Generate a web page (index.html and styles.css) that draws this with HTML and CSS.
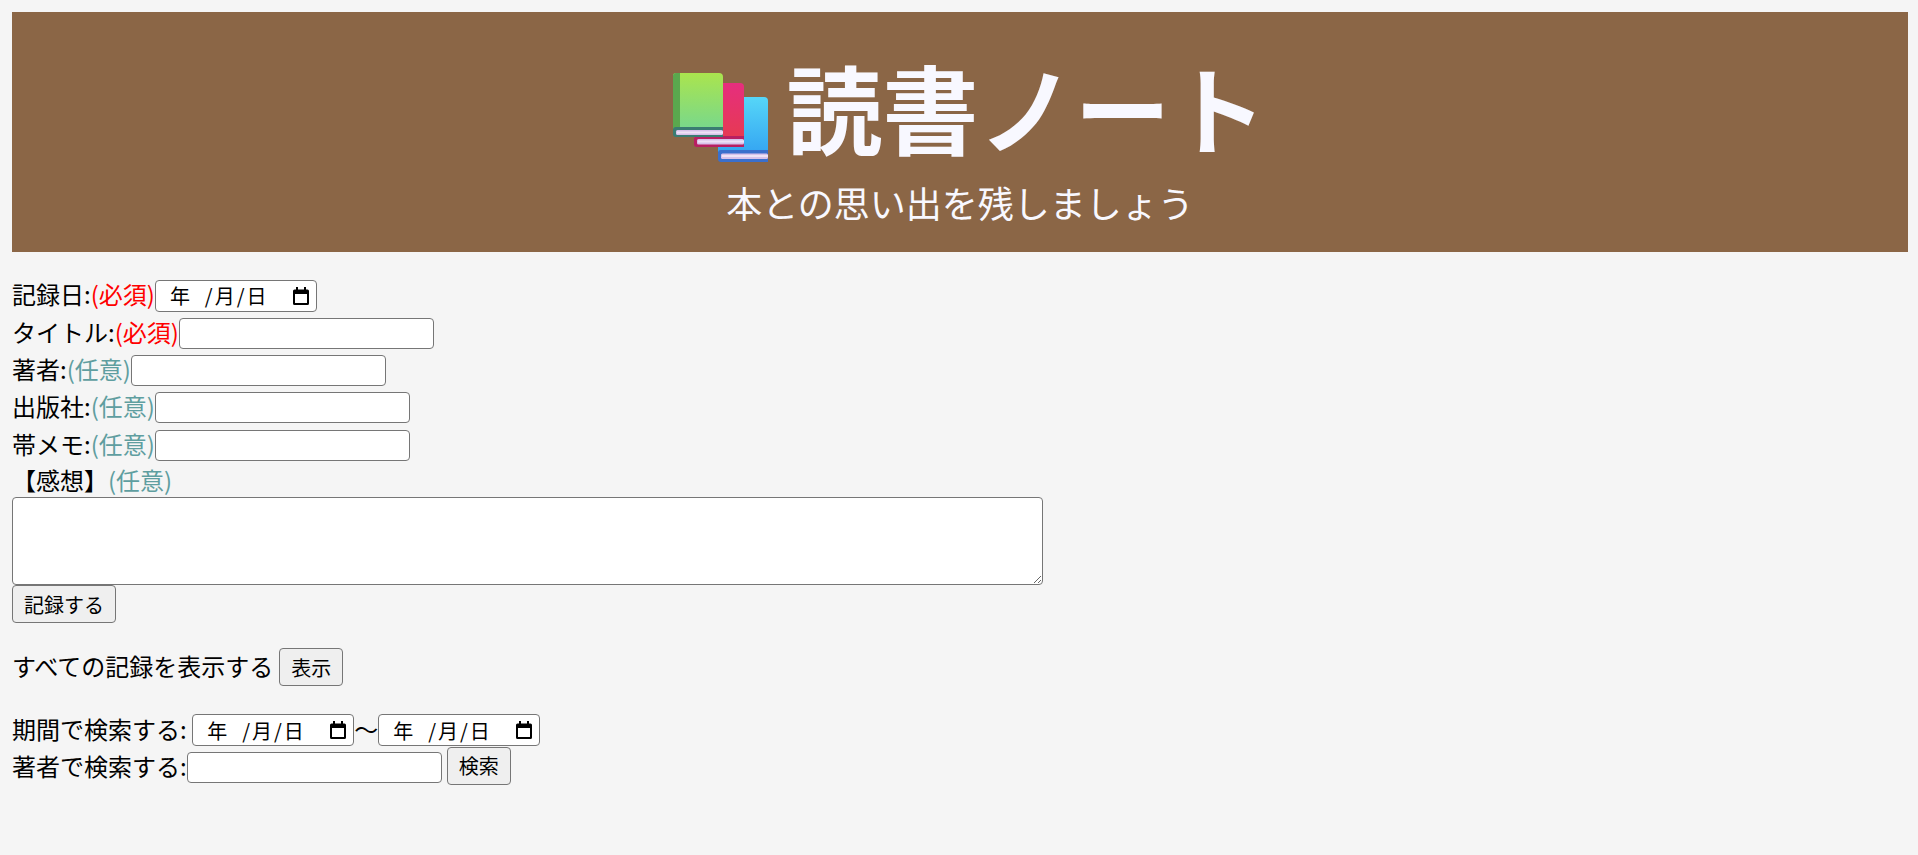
FILE: index.html
```html
<!DOCTYPE html>
<html lang="ja">
<head>
<meta charset="utf-8">
<title>読書ノート</title>
<link rel="stylesheet" href="styles.css">
</head>
<body>
<header class="site-header">
  <h1 class="site-title">
    <svg class="books" viewBox="0 0 96 89" aria-hidden="true">
      <defs>
        <linearGradient id="gGreen" x1="0" y1="0" x2="0" y2="1"><stop offset="0" stop-color="#aae44e"/><stop offset="1" stop-color="#78d88c"/></linearGradient>
        <linearGradient id="gRed" x1="0" y1="0" x2="0" y2="1"><stop offset="0" stop-color="#e62e7e"/><stop offset="1" stop-color="#e63a52"/></linearGradient>
        <linearGradient id="gBlue" x1="0" y1="0" x2="0" y2="1"><stop offset="0" stop-color="#56d6f8"/><stop offset="1" stop-color="#35a6f2"/></linearGradient>
      </defs>
      <g>
        <path d="M48 24H91a4 4 0 0 1 4 4V79H45V27Z" fill="url(#gBlue)"/>
        <path d="M45 80a3 3 0 0 1 3-3H95V89H48a3 3 0 0 1-3-3Z" fill="#3a6fcc"/>
        <rect x="48" y="80.500" width="47" height="5.500" rx="1.500" fill="#d8c2ea"/>
        <rect x="49" y="82" width="46" height="2" fill="#eee2f6"/>
      </g>
      <g>
        <path d="M24 10H67a4 4 0 0 1 4 4V65H21V13Z" fill="url(#gRed)"/>
        <path d="M21 66a3 3 0 0 1 3-3H71V74H24a3 3 0 0 1-3-3Z" fill="#b81f62"/>
        <rect x="24" y="66" width="47" height="5.500" rx="1.500" fill="#d8c2ea"/>
        <rect x="25" y="67.500" width="46" height="2" fill="#eee2f6"/>
      </g>
      <g>
        <path d="M3 0H46a4 4 0 0 1 4 4V56H0V3a3 3 0 0 1 3-3Z" fill="url(#gGreen)"/>
        <path d="M3 0H7V56H0V3a3 3 0 0 1 3-3Z" fill="#5aa84e"/>
        <path d="M0 57a3 3 0 0 1 3-3H50V64H3a3 3 0 0 1-3-3Z" fill="#3a7c72"/>
        <rect x="3" y="57" width="47" height="5" rx="1.500" fill="#d8c2ea"/>
        <rect x="4" y="58.500" width="46" height="2" fill="#eee2f6"/>
      </g>
    </svg>
    <span>読書ノート</span>
  </h1>
  <p class="site-sub">本との思い出を残しましょう</p>
</header>

<form class="record-form">
  <div class="row"><label>記録日:<span class="req">(必須)</span></label>
    <span class="date-field"><span class="date-text">年 &nbsp;/月/日</span><svg class="cal" viewBox="0 0 16 18"><path d="M3 0h2v2.500h6V0h2v2.500h1.500A1.500 1.500 0 0 1 16 4v12.500a1.500 1.500 0 0 1-1.500 1.500h-13A1.500 1.500 0 0 1 0 16.500V4a1.500 1.500 0 0 1 1.500-1.500H3Zm-1 7V16h12V7Z"/></svg></span></div>
  <div class="row"><label>タイトル:<span class="req">(必須)</span></label><input class="text-field" type="text"></div>
  <div class="row"><label>著者:<span class="opt">(任意)</span></label><input class="text-field" type="text"></div>
  <div class="row"><label>出版社:<span class="opt">(任意)</span></label><input class="text-field" type="text"></div>
  <div class="row"><label>帯メモ:<span class="opt">(任意)</span></label><input class="text-field" type="text"></div>
  <div class="row row-short"><label>【感想】<span class="opt">(任意)</span></label></div>
  <textarea class="memo"></textarea>
  <button class="btn btn-record" type="button">記録する</button>
</form>

<div class="row show-all"><span class="inline-text">すべての記録を表示する</span><button class="btn btn-gap" type="button">表示</button></div>

<div class="search">
  <div class="row"><label>期間で検索する:</label>
    <span class="date-field date-gap"><span class="date-text">年 &nbsp;/月/日</span><svg class="cal" viewBox="0 0 16 18"><path d="M3 0h2v2.500h6V0h2v2.500h1.500A1.500 1.500 0 0 1 16 4v12.500a1.500 1.500 0 0 1-1.500 1.500h-13A1.500 1.500 0 0 1 0 16.500V4a1.500 1.500 0 0 1 1.500-1.500H3Zm-1 7V16h12V7Z"/></svg></span><span class="inline-text">〜</span><span class="date-field"><span class="date-text">年 &nbsp;/月/日</span><svg class="cal" viewBox="0 0 16 18"><path d="M3 0h2v2.500h6V0h2v2.500h1.500A1.500 1.500 0 0 1 16 4v12.500a1.500 1.500 0 0 1-1.500 1.500h-13A1.500 1.500 0 0 1 0 16.500V4a1.500 1.500 0 0 1 1.500-1.500H3Zm-1 7V16h12V7Z"/></svg></span></div>
  <div class="row"><label>著者で検索する:</label><input class="text-field" type="text"><button class="btn btn-gap btn-search" type="button">検索</button></div>
</div>
</body>
</html>
```
FILE: styles.css
```css
* { box-sizing: border-box; }
html, body { margin: 0; }
body {
  padding: 12px 10px 12px 12px;
  background: #f5f5f5;
  color: #000;
  font-family: "Noto Sans CJK JP", "Noto Sans", sans-serif;
  font-size: 24px;
}
.site-header {
  height: 240px;
  background: #8b6646;
  color: #f8f8ff;
  display: flex;
  flex-direction: column;
  align-items: center;
  padding-top: 39px;
}
.site-title {
  margin: 0;
  display: flex;
  align-items: center;
  font-size: 96px;
  font-weight: 700;
  line-height: 110px;
  height: 110px;
}
.books { width: 96px; height: 89px; margin: 23px 18px 0 19px; }
.site-sub {
  margin: 17px 0 0;
  font-size: 36px;
  line-height: 48px;
}
.record-form { margin-top: 25px; }
.row {
  display: flex;
  align-items: center;
  height: 37.4px;
  white-space: nowrap;
}
.row-short { height: 33.5px; }
.row label, .inline-text { padding-bottom: 4px; }
.row-short label { padding-bottom: 1.5px; }
.req { color: #f00; }
.opt { color: #5f9ea0; }
.text-field, .date-field {
  border: 1.5px solid #767676;
  border-radius: 4px;
  background: #fff;
}
.text-field { width: 255px; height: 31px; padding: 0; }
.date-field {
  width: 162px;
  height: 32px;
  display: flex;
  align-items: center;
  justify-content: space-between;
  padding: 0 7px 0 14px;
  font-size: 20px;
  letter-spacing: 2px;
}
.date-gap { margin-left: 5.5px; }
.cal { width: 16px; height: 18px; fill: #000; }
.memo {
  display: block;
  width: 1031px;
  height: 88px;
  border: 1.5px solid #767676;
  border-radius: 4px;
  background: #fff;
}
.btn {
  height: 38px;
  padding: 0 11px;
  border: 1.5px solid #767676;
  border-radius: 4px;
  background: #efefef;
  color: #000;
  font-family: inherit;
  font-size: 20px;
}
.btn-record { display: block; width: 104px; }
.btn-gap { margin-left: 6px; width: 64px; }
.btn-search { margin: 0 0 4px 5px; }
.show-all { margin-top: 25px; height: 38px; }
.search { margin-top: 25px; }
```
